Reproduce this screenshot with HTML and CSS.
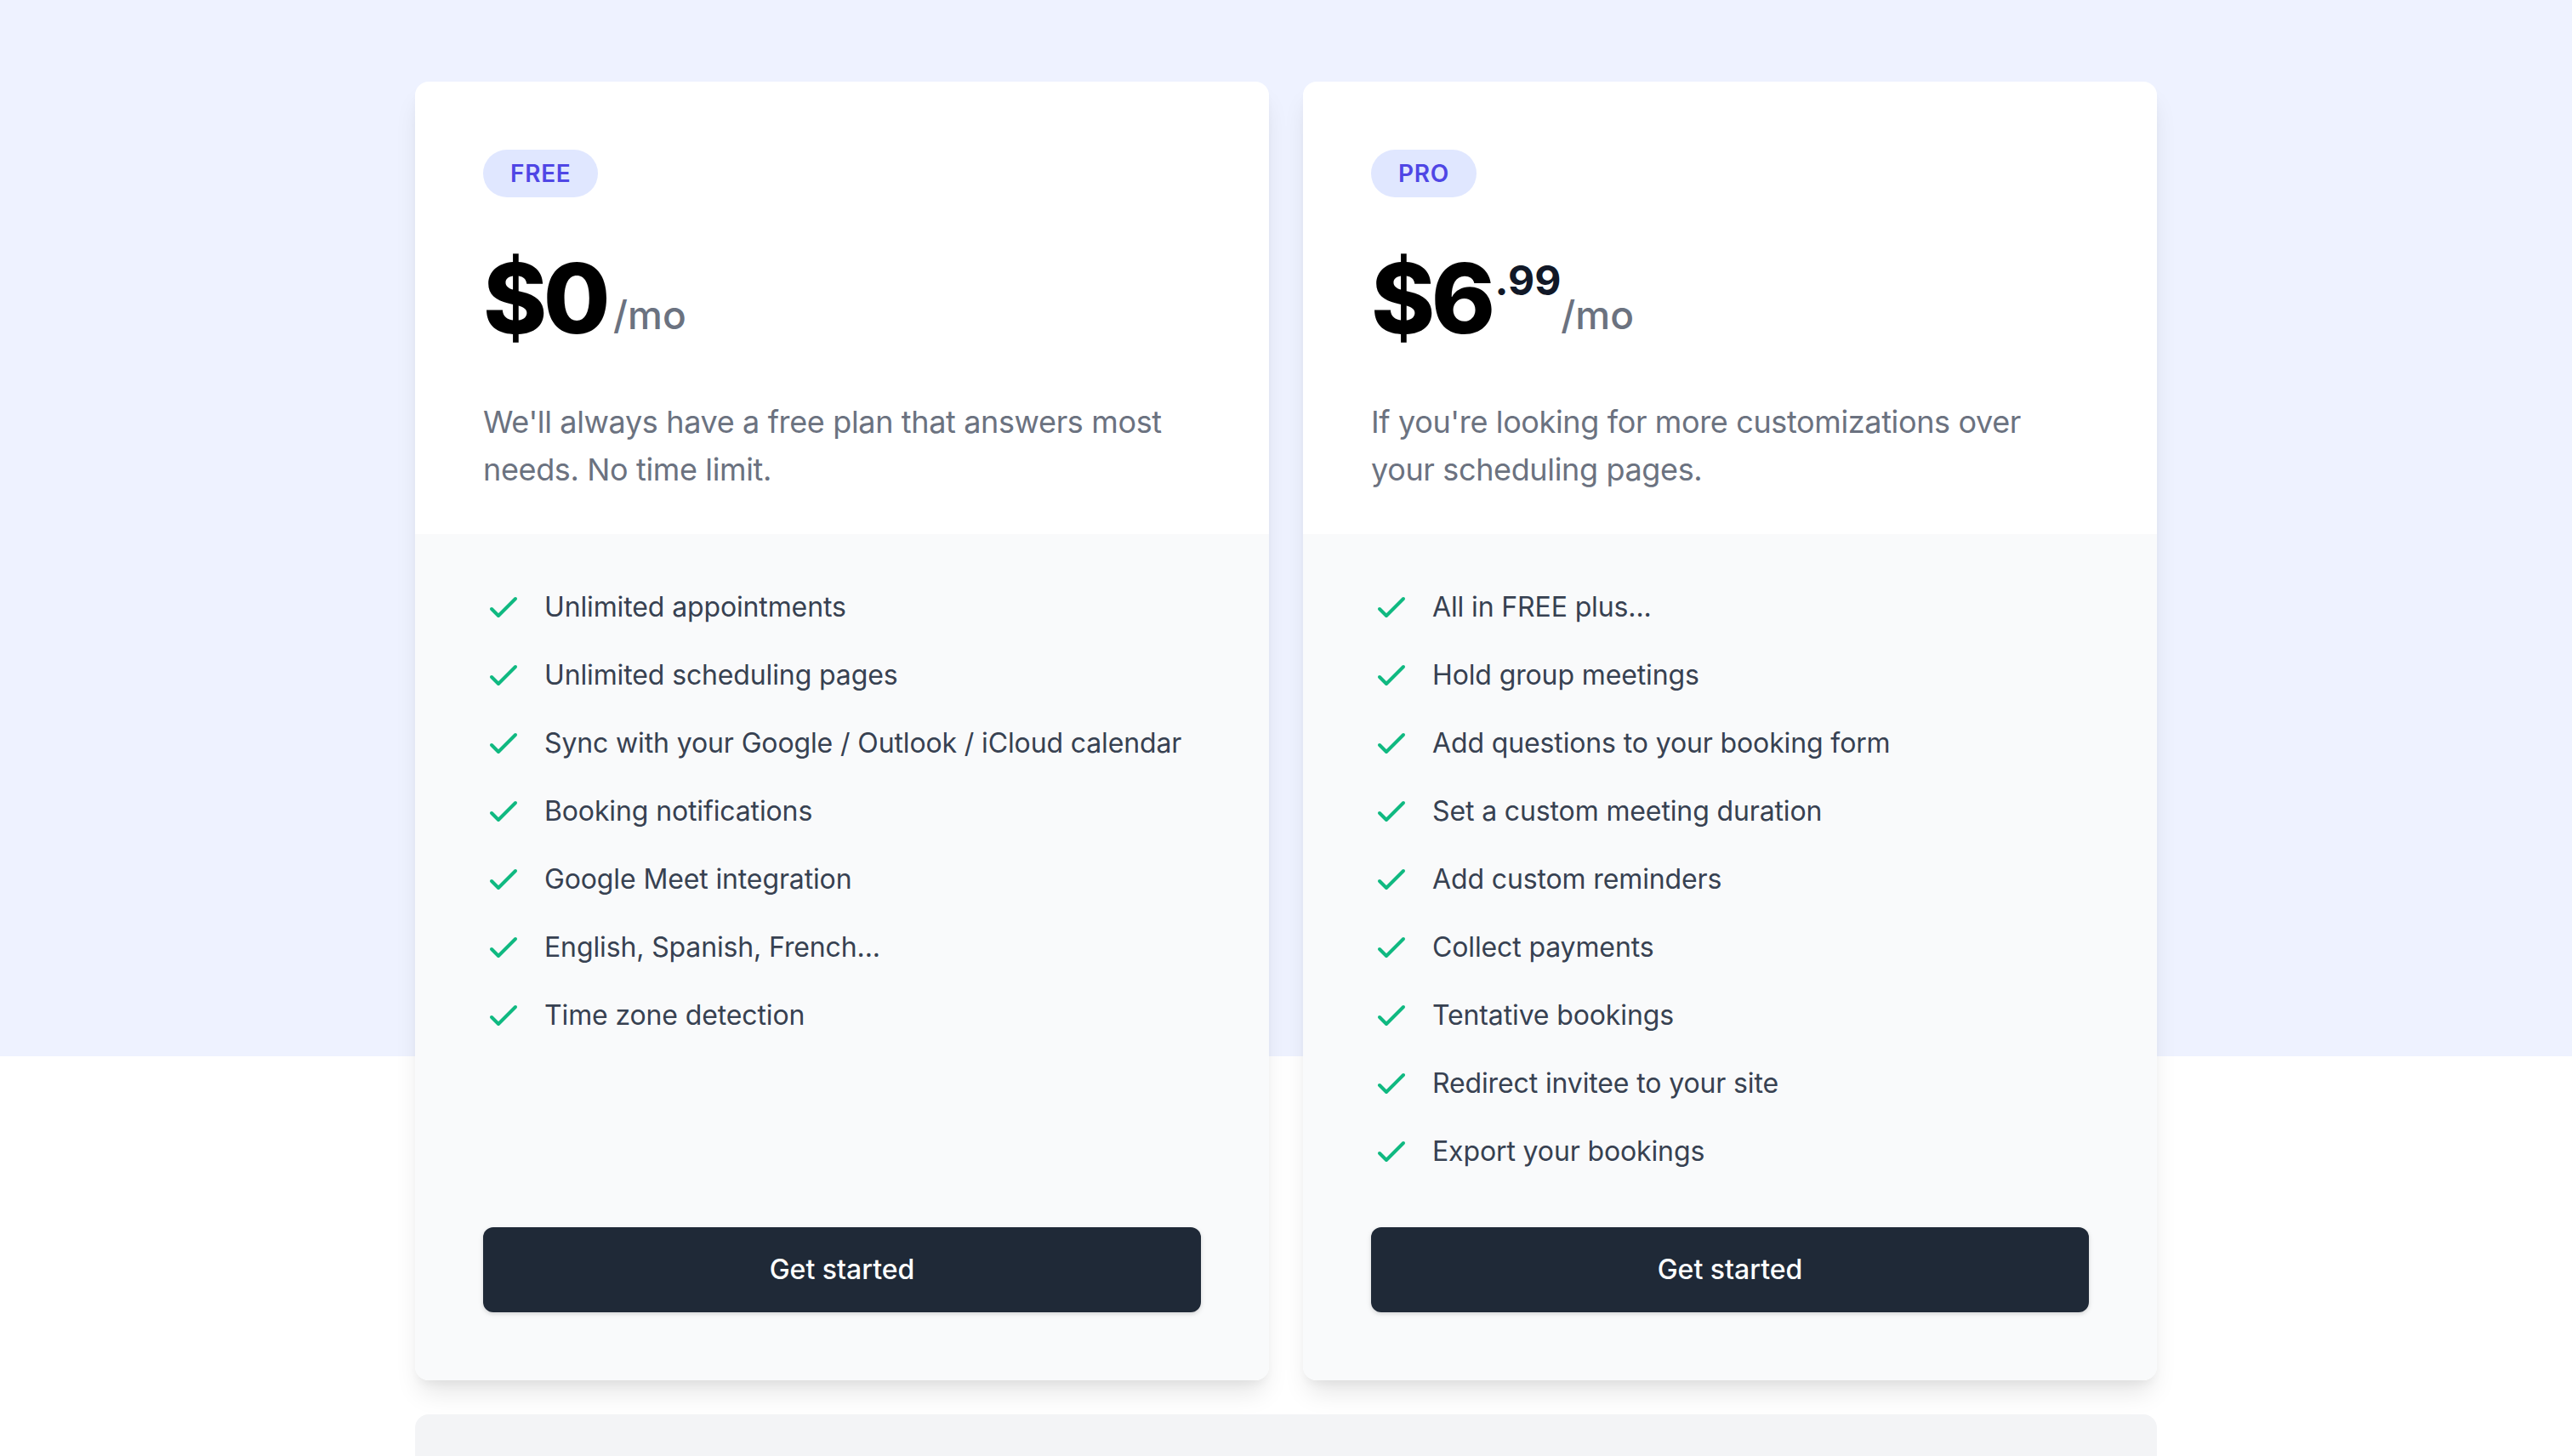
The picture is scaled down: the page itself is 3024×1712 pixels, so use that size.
FILE: index.html
```html
<!DOCTYPE html>
<html lang="en">
<head>
    <meta charset="UTF-8">
    <meta name="viewport" content="width=device-width, initial-scale=1.0">
    <title>Pricing</title>
    <link rel="stylesheet" href="styles.css">
</head>
<body>
    <section class="pricing">
        <div class="plans">
            <div class="plan">
                <div class="plan-head">
                    <span class="badge">Free</span>
                    <div class="price">$0<span class="per">/mo</span></div>
                    <p class="summary">We'll always have a free plan that answers most needs. No time limit.</p>
                </div>
                <div class="plan-body">
                    <ul class="features">
                        <li><svg viewBox="0 0 24 24"><path d="M5 13l4 4L19 7"/></svg><span>Unlimited appointments</span></li>
                        <li><svg viewBox="0 0 24 24"><path d="M5 13l4 4L19 7"/></svg><span>Unlimited scheduling pages</span></li>
                        <li><svg viewBox="0 0 24 24"><path d="M5 13l4 4L19 7"/></svg><span>Sync with your Google / Outlook / iCloud calendar</span></li>
                        <li><svg viewBox="0 0 24 24"><path d="M5 13l4 4L19 7"/></svg><span>Booking notifications</span></li>
                        <li><svg viewBox="0 0 24 24"><path d="M5 13l4 4L19 7"/></svg><span>Google Meet integration</span></li>
                        <li><svg viewBox="0 0 24 24"><path d="M5 13l4 4L19 7"/></svg><span>English, Spanish, French...</span></li>
                        <li><svg viewBox="0 0 24 24"><path d="M5 13l4 4L19 7"/></svg><span>Time zone detection</span></li>
                    </ul>
                    <a href="#" class="start">Get started</a>
                </div>
            </div>

            <div class="plan">
                <div class="plan-head">
                    <span class="badge">Pro</span>
                    <div class="price">$6<span class="cents">.99</span><span class="per">/mo</span></div>
                    <p class="summary">If you're looking for more customizations over your scheduling pages.</p>
                </div>
                <div class="plan-body">
                    <ul class="features">
                        <li><svg viewBox="0 0 24 24"><path d="M5 13l4 4L19 7"/></svg><span>All in FREE plus...</span></li>
                        <li><svg viewBox="0 0 24 24"><path d="M5 13l4 4L19 7"/></svg><span>Hold group meetings</span></li>
                        <li><svg viewBox="0 0 24 24"><path d="M5 13l4 4L19 7"/></svg><span>Add questions to your booking form</span></li>
                        <li><svg viewBox="0 0 24 24"><path d="M5 13l4 4L19 7"/></svg><span>Set a custom meeting duration</span></li>
                        <li><svg viewBox="0 0 24 24"><path d="M5 13l4 4L19 7"/></svg><span>Add custom reminders</span></li>
                        <li><svg viewBox="0 0 24 24"><path d="M5 13l4 4L19 7"/></svg><span>Collect payments</span></li>
                        <li><svg viewBox="0 0 24 24"><path d="M5 13l4 4L19 7"/></svg><span>Tentative bookings</span></li>
                        <li><svg viewBox="0 0 24 24"><path d="M5 13l4 4L19 7"/></svg><span>Redirect invitee to your site</span></li>
                        <li><svg viewBox="0 0 24 24"><path d="M5 13l4 4L19 7"/></svg><span>Export your bookings</span></li>
                    </ul>
                    <a href="#" class="start">Get started</a>
                </div>
            </div>
        </div>
    </section>

    <div class="next-section"></div>
</body>
</html>
```

FILE: styles.css
```css
body {
    margin: 0;
    font-family: Inter, "Noto Sans", sans-serif;
    background-color: #ffffff;
    color: #111827;
}
.pricing {
    /* blue band stops behind the cards */
    background: linear-gradient(to bottom, #eef2ff 1242px, #ffffff 1242px);
    padding-top: 96px;
}
.plans {
    width: 2048px;
    margin: 0 auto;
    display: grid;
    grid-template-columns: 1fr 1fr;
    gap: 40px;
}
.plan {
    display: flex;
    flex-direction: column;
    border-radius: 16px;
    overflow: hidden;
    box-shadow: 0 20px 30px -6px rgba(0, 0, 0, 0.1), 0 8px 12px -4px rgba(0, 0, 0, 0.05);
}
.plan-head {
    display: flex;
    flex-direction: column;
    align-items: flex-start;
    background-color: #ffffff;
    padding: 80px 80px 48px;
}
.badge {
    padding: 8px 32px;
    border-radius: 9999px;
    background-color: #e0e7ff;
    color: #4f46e5;
    font-size: 28px;
    line-height: 40px;
    font-weight: 600;
    letter-spacing: 0.025em;
    text-transform: uppercase;
}
.price {
    display: flex;
    align-items: baseline;
    margin-top: 62px;
    font-size: 114px;
    line-height: 1;
    font-weight: 800;
    letter-spacing: -0.04em;
    color: #000000;
}
.cents {
    align-self: flex-start;
    margin-top: 12px;
    margin-left: 4px;
    font-size: 48px;
    font-weight: 700;
    letter-spacing: 0;
    color: #111827;
}
.per {
    /* sits a little above the big figure's baseline */
    align-self: flex-end;
    margin-bottom: 15px;
    margin-left: 8px;
    font-size: 46px;
    font-weight: 500;
    letter-spacing: 0;
    color: #6b7280;
}
.cents + .per {
    margin-left: 0;
}
.summary {
    max-width: 825px;
    margin: 60px 0 0;
    font-size: 36px;
    line-height: 56px;
    letter-spacing: -0.01em;
    color: #6b7280;
}
.plan-body {
    flex: 1;
    display: flex;
    flex-direction: column;
    justify-content: space-between;
    gap: 65px;
    background-color: #f9fafb;
    padding: 62px 80px 80px;
}
.features {
    list-style: none;
    margin: 0;
    padding: 0;
    display: flex;
    flex-direction: column;
    gap: 32px;
}
.features li {
    display: flex;
    align-items: flex-start;
}
.features svg {
    flex-shrink: 0;
    width: 48px;
    height: 48px;
    fill: none;
    stroke: #10b981;
    stroke-width: 2;
    stroke-linecap: round;
    stroke-linejoin: round;
}
.features span {
    margin-left: 24px;
    font-size: 32px;
    line-height: 48px;
    letter-spacing: -0.004em;
    color: #374151;
}
.start {
    display: flex;
    align-items: center;
    justify-content: center;
    padding: 24px 40px;
    border: 2px solid transparent;
    border-radius: 12px;
    background-color: #1f2937;
    color: #ffffff;
    font-size: 32px;
    line-height: 48px;
    font-weight: 500;
    text-decoration: none;
    box-shadow: 0 2px 6px rgba(0, 0, 0, 0.1), 0 2px 4px rgba(0, 0, 0, 0.06);
}
.next-section {
    width: 2048px;
    height: 120px;
    margin: 40px auto 0;
    border-radius: 16px 16px 0 0;
    background-color: #f3f4f6;
}
```
